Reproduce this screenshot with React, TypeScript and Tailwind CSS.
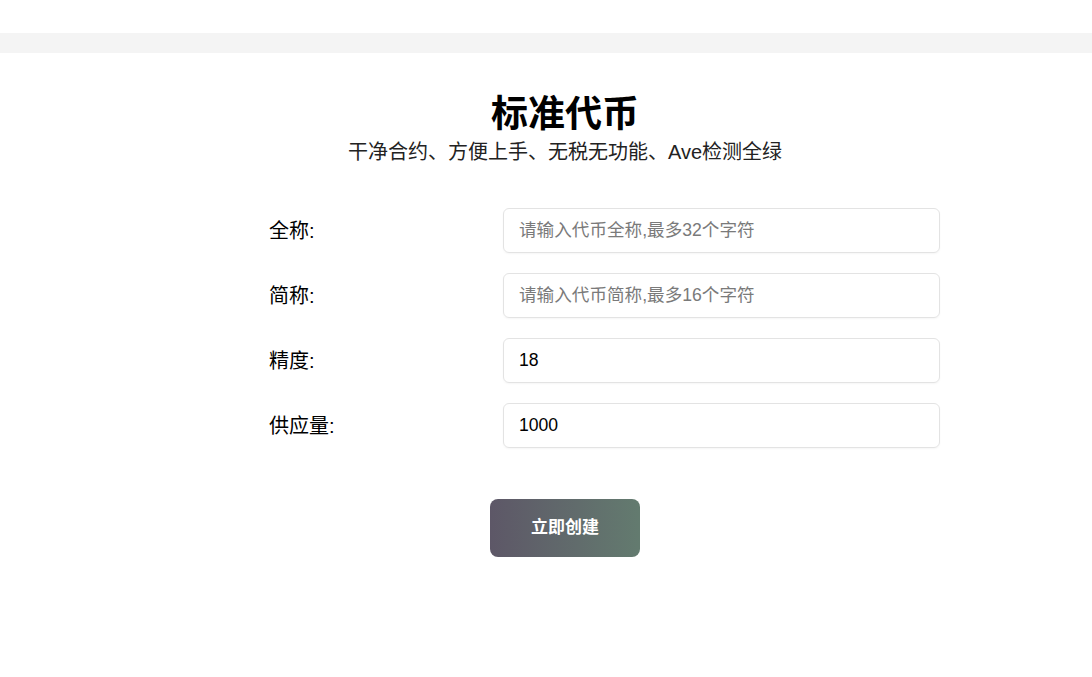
const fields = [
  { label: "全称", placeholder: "请输入代币全称,最多32个字符", value: "" },
  { label: "简称", placeholder: "请输入代币简称,最多16个字符", value: "" },
  { label: "精度", placeholder: "", value: "18" },
  { label: "供应量", placeholder: "", value: "1000" },
];

export default function App() {
  return (
    <div className="min-h-[677px] bg-white font-['Liberation_Sans','Noto_Sans_CJK_SC',sans-serif] text-black">
      {/* header strip */}
      <div className="h-[33px]" />
      <div className="h-[20px] bg-[#f4f4f4]" />

      <div className="pl-[38px] pt-[38px] text-center">
        <h1 className="text-[37px] font-bold leading-[48px]">标准代币</h1>
        <p className="text-[20px] leading-[26px] text-[#222]">
          干净合约、方便上手、无税无功能、Ave检测全绿
        </p>
      </div>

      <form
        className="ml-[269px] mt-[43px] flex w-[671px] flex-col gap-[20px]"
        onSubmit={(e) => e.preventDefault()}
      >
        {fields.map((f) => (
          <div key={f.label} className="flex items-center">
            <label className="w-[234px] text-[20px] leading-[26px]">
              {f.label}:
            </label>
            <input
              className="h-[45px] flex-1 rounded-[6px] border border-[#e3e3e3] px-[15px] text-[17.6px] text-black shadow-[0_1px_2px_rgba(0,0,0,0.04)] outline-none placeholder:text-[#7a7a7a]"
              placeholder={f.placeholder}
              defaultValue={f.value}
            />
          </div>
        ))}
      </form>

      <button className="ml-[490px] mt-[51px] h-[58px] w-[150px] rounded-[8px] bg-linear-to-r from-[#5d5767] to-[#637b6f] text-[17px] font-bold text-white">
        立即创建
      </button>
    </div>
  );
}
